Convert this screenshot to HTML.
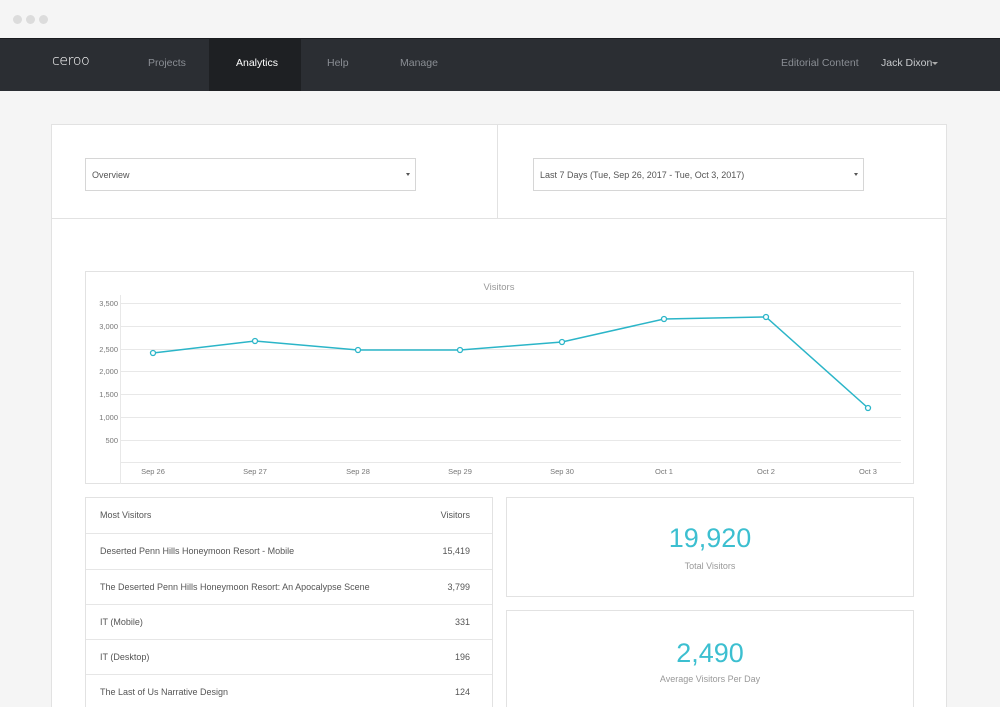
<!DOCTYPE html>
<html><head><meta charset="utf-8"><style>
*{margin:0;padding:0;box-sizing:border-box}
html,body{width:1000px;height:707px;overflow:hidden}
body{background:#f5f5f5;font-family:"Liberation Sans",sans-serif;position:relative;color:#333}
.a{position:absolute}
.dot{position:absolute;top:15px;width:9px;height:9px;border-radius:50%;background:#dcdcdc}
.nav{position:absolute;left:0;top:38px;width:1000px;height:53px;background:#2b2e33;border-top:1px solid #1a1c1f}
.nav span{position:absolute;top:18px;font-size:10.5px;color:#8a8e94}
.box{position:absolute;background:#fff;border:1px solid #e2e2e2}
.sel{position:absolute;border:1px solid #d6d6d6;background:#fff;height:33px;font-size:9px;color:#555;padding:11px 0 0 6px}
.sel i{position:absolute;right:5px;top:14px;width:0;height:0;border-left:2.5px solid transparent;border-right:2.5px solid transparent;border-top:3px solid #555}
.row{position:absolute;left:0;width:406px;height:35px;border-top:1px solid #e6e6e6;font-size:9px;color:#555}
.row b{font-weight:normal;position:absolute;left:14px;top:12px}
.row em{font-style:normal;position:absolute;right:22px;top:12px}
.big{position:absolute;width:100%;text-align:center;color:#3cbfd0;font-size:27px;font-weight:300}
.lbl{position:absolute;width:100%;text-align:center;color:#999;font-size:9px}
</style></head><body>
<div class="dot" style="left:13px"></div><div class="dot" style="left:26px"></div><div class="dot" style="left:39px"></div>
<div class="nav">
<div class="a" style="left:209px;top:0;width:92px;height:52px;background:#1e2023"></div>
<span style="left:52px;top:14px;color:#fff;font-size:14px;letter-spacing:-0.3px;font-family:'DejaVu Sans',sans-serif;font-weight:300">ceroo</span>
<span style="left:148px">Projects</span>
<span style="left:236px;color:#fff">Analytics</span>
<span style="left:327px">Help</span>
<span style="left:400px">Manage</span>
<span style="left:781px">Editorial Content</span>
<span style="left:881px;color:#c8cacd">Jack Dixon</span>
<div class="a" style="left:932px;top:23px;border-left:3px solid transparent;border-right:3px solid transparent;border-top:3.5px solid #aaa"></div>
</div>
<div class="box" style="left:51px;top:124px;width:896px;height:600px"></div>
<div class="a" style="left:51px;top:218px;width:896px;height:1px;background:#e2e2e2"></div>
<div class="a" style="left:497px;top:124px;width:1px;height:94px;background:#e2e2e2"></div>
<div class="sel" style="left:85px;top:158px;width:331px">Overview<i></i></div>
<div class="sel" style="left:533px;top:158px;width:331px">Last 7 Days (Tue, Sep 26, 2017 - Tue, Oct 3, 2017)<i></i></div>
<svg class="a" style="left:85px;top:271px" width="829" height="213" viewBox="85 271 829 213">
<rect x="85.5" y="271.5" width="828" height="212" fill="#fff" stroke="#e2e2e2"/>
<text x="499" y="290" font-size="9.5" fill="#999" text-anchor="middle" font-family="Liberation Sans">Visitors</text>
<g stroke="#e8e8e8" stroke-width="1">
<line x1="120" y1="303.5" x2="901" y2="303.5"/><line x1="120" y1="326.5" x2="901" y2="326.5"/><line x1="120" y1="349.5" x2="901" y2="349.5"/><line x1="120" y1="371.5" x2="901" y2="371.5"/><line x1="120" y1="394.5" x2="901" y2="394.5"/><line x1="120" y1="417.5" x2="901" y2="417.5"/><line x1="120" y1="440.5" x2="901" y2="440.5"/><line x1="120" y1="462.5" x2="901" y2="462.5"/><line x1="120.5" y1="295" x2="120.5" y2="484"/>
</g>
<g font-size="7.5" fill="#777" text-anchor="end" font-family="Liberation Sans">
<text x="118" y="306">3,500</text><text x="118" y="329">3,000</text><text x="118" y="352">2,500</text><text x="118" y="374">2,000</text><text x="118" y="397">1,500</text><text x="118" y="420">1,000</text><text x="118" y="443">500</text>
</g>
<g font-size="7.5" fill="#777" text-anchor="middle" font-family="Liberation Sans">
<text x="153" y="474">Sep 26</text><text x="255" y="474">Sep 27</text><text x="358" y="474">Sep 28</text><text x="460" y="474">Sep 29</text><text x="562" y="474">Sep 30</text><text x="664" y="474">Oct 1</text><text x="766" y="474">Oct 2</text><text x="868" y="474">Oct 3</text>
</g>
<polyline fill="none" stroke="#2bb5c8" stroke-width="1.5" points="153,353 255,341 358,350 460,350 562,342 664,319 766,317 868,408"/>
<g fill="#fff" stroke="#2bb5c8" stroke-width="1.3">
<circle cx="153" cy="353" r="2.5"/><circle cx="255" cy="341" r="2.5"/><circle cx="358" cy="350" r="2.5"/><circle cx="460" cy="350" r="2.5"/><circle cx="562" cy="342" r="2.5"/><circle cx="664" cy="319" r="2.5"/><circle cx="766" cy="317" r="2.5"/><circle cx="868" cy="408" r="2.5"/>
</g>
</svg>
<div class="box" style="left:85px;top:497px;width:408px;height:220px">
<div class="row" style="top:0;border-top:none"><b>Most Visitors</b><em>Visitors</em></div>
<div class="row" style="top:35px"><b>Deserted Penn Hills Honeymoon Resort - Mobile</b><em>15,419</em></div>
<div class="row" style="top:71px"><b>The Deserted Penn Hills Honeymoon Resort: An Apocalypse Scene</b><em>3,799</em></div>
<div class="row" style="top:106px"><b>IT (Mobile)</b><em>331</em></div>
<div class="row" style="top:141px"><b>IT (Desktop)</b><em>196</em></div>
<div class="row" style="top:176px"><b>The Last of Us Narrative Design</b><em>124</em></div>
</div>
<div class="box" style="left:506px;top:497px;width:408px;height:100px">
<div class="big" style="top:25px">19,920</div><div class="lbl" style="top:63px">Total Visitors</div>
</div>
<div class="box" style="left:506px;top:610px;width:408px;height:110px">
<div class="big" style="top:27px">2,490</div><div class="lbl" style="top:63px">Average Visitors Per Day</div>
</div>
</body></html>
